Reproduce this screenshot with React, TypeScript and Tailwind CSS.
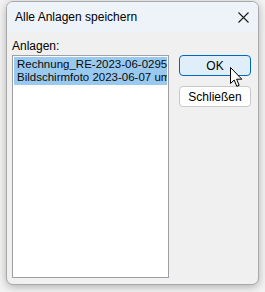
export default function App() {
  return (
    <div className="w-[265px] h-[292px] bg-[#f3f3f3] pt-px pl-[6px]" style={{ fontFamily: '"Liberation Sans", Arial, sans-serif' }}>
      <div className="w-[253px] h-[284px] bg-[#f0f0f0] rounded-[7px] border border-[#a9a9a9] shadow-[0_2px_8px_rgba(0,0,0,0.28)] overflow-hidden flex flex-col">
        {/* Title bar */}
        <div className="h-[30px] bg-[#eef3fa] flex items-center justify-between pl-[8px] pr-[9px]">
          <span className="text-[12px] text-black leading-none">Alle Anlagen speichern</span>
          <svg width="11" height="11" viewBox="0 0 11 11">
            <path d="M0.5 0.5 L10.5 10.5 M10.5 0.5 L0.5 10.5" stroke="#1a1a1a" strokeWidth="1.1" />
          </svg>
        </div>

        {/* Body */}
        <div className="flex flex-1 pl-[5px] pt-[6px] pb-[6px]">
          <div className="flex flex-col">
            <span className="text-[12px] leading-[16px] text-black h-[17px]">Anlagen:</span>
            <div className="w-[157px] flex-1 bg-white border border-[#9f9fa6] p-px">
              <div className="bg-[#99c9ef] text-[11.5px] leading-[13px] text-[#0b0b0b] pl-[3px] pt-px pb-px whitespace-nowrap overflow-hidden">
                <div>Rechnung_RE-2023-06-0295_0</div>
                <div>Bildschirmfoto 2023-06-07 um</div>
              </div>
            </div>
          </div>

          <div className="relative flex flex-col gap-[10px] pt-[17px] pl-[10px]">
            <button className="w-[72px] h-[21px] rounded-[4px] border border-[#0067c0] bg-[#e0eef9] text-[12px] text-black leading-none">
              OK
            </button>
            <button className="w-[72px] h-[21px] rounded-[4px] border border-[#c9c9c9] bg-white text-[12px] text-black leading-none">
              Schließen
            </button>
            {/* cursor */}
            <svg className="absolute left-[61px] top-[29px]" width="13" height="21" viewBox="0 0 13 21">
              <path d="M0.5 0.5 L0.5 16.5 L4.2 13 L6.8 19.3 L9.2 18.3 L6.6 12.2 L11.8 12.2 Z" fill="#ffffff" stroke="#000000" strokeWidth="1" strokeLinejoin="round" />
            </svg>
          </div>
        </div>
      </div>
    </div>
  );
}
